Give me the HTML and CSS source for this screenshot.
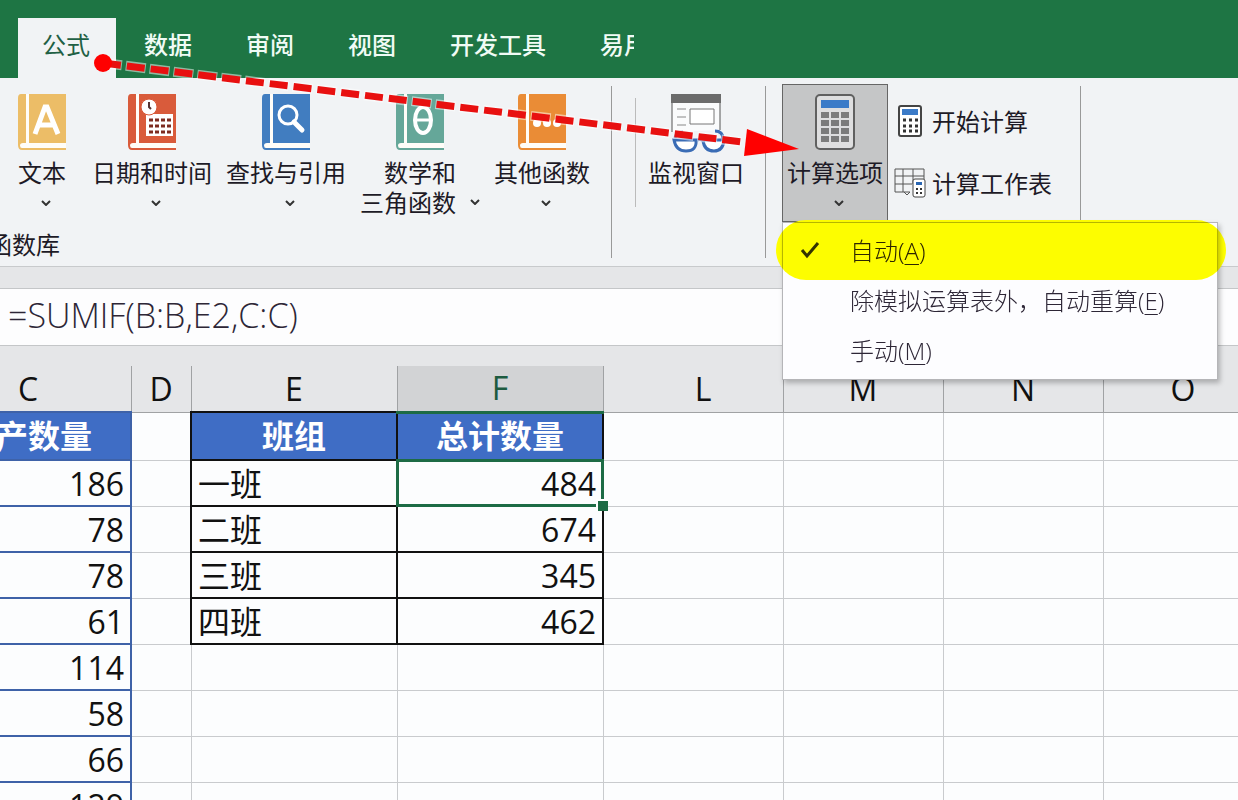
FILE: index.html
```html
<!DOCTYPE html>
<html lang="zh-CN">
<head>
    <meta charset="UTF-8">
    <meta name="viewport" content="width=device-width, initial-scale=1.0">
    <title>Excel 公式 - 计算选项</title>
    <link rel="stylesheet" href="styles.css">
</head>
<body>
    <!-- 公用图形 -->
    <svg class="defs" width="0" height="0" aria-hidden="true">
        <symbol id="book" viewBox="0 0 48 56">
            <path d="M3 0H48V56H4Q0 56 0 51V4Q0 0 3 0Z" fill="currentColor"/>
            <path d="M8 0H11V49H48V54H4Q2 54 2 51.500Q2 49 5 49H8Z" fill="#fffdf8"/>
        </symbol>
        <symbol id="chevron" viewBox="0 0 10 6">
            <path d="M1 1L5 5L9 1" fill="none" stroke="#333" stroke-width="2"/>
        </symbol>
    </svg>

    <div class="app">
        <nav class="tabs">
            <button class="tab active">公式</button>
            <button class="tab">数据</button>
            <button class="tab">审阅</button>
            <button class="tab">视图</button>
            <button class="tab">开发工具</button>
            <button class="tab cut"><span>易用</span></button>
        </nav>

        <div class="ribbon">
            <div class="group library">
                <div class="tools">
                    <button class="tool text">
                        <svg class="icon yellow" width="48" height="56" viewBox="0 0 48 56"><use href="#book"/>
                            <path d="M17 40L27 13H29L40 40M21 31H36" fill="none" stroke="#fff" stroke-width="5"/>
                        </svg>
                        <span>文本</span>
                        <svg class="arrow" width="10" height="6"><use href="#chevron"/></svg>
                    </button>
                    <button class="tool">
                        <svg class="icon red" width="48" height="56" viewBox="0 0 48 56"><use href="#book"/>
                            <path d="M18 20H45V42H18Z" fill="#fff"/>
                            <circle cx="21" cy="13" r="8" fill="#fff" stroke="#d85736"/>
                            <path d="M21 8V13L23 15" fill="none" stroke="#533" stroke-width="2"/>
                            <path d="M21 26H43M21 32H43M21 38H43" stroke="#7d2b20" stroke-width="3" stroke-dasharray="4 2"/>
                        </svg>
                        <span>日期和时间</span>
                        <svg class="arrow" width="10" height="6"><use href="#chevron"/></svg>
                    </button>
                    <button class="tool">
                        <svg class="icon blue" width="48" height="56" viewBox="0 0 48 56"><use href="#book"/>
                            <circle cx="26" cy="21" r="9" fill="none" stroke="#fff" stroke-width="3"/>
                            <path d="M32 28L40 36" stroke="#fff" stroke-width="5" stroke-linecap="round"/>
                        </svg>
                        <span>查找与引用</span>
                        <svg class="arrow" width="10" height="6"><use href="#chevron"/></svg>
                    </button>
                    <button class="tool">
                        <svg class="icon teal" width="48" height="56" viewBox="0 0 48 56"><use href="#book"/>
                            <ellipse cx="27" cy="26" rx="8" ry="13" fill="none" stroke="#fff" stroke-width="4"/>
                            <path d="M19 26H35" stroke="#fff" stroke-width="3"/>
                        </svg>
                        <span>数学和</span>
                        <span class="line">三角函数<svg width="10" height="6"><use href="#chevron"/></svg></span>
                    </button>
                    <button class="tool">
                        <svg class="icon orange" width="48" height="56" viewBox="0 0 48 56"><use href="#book"/>
                            <circle cx="19" cy="29" r="4" fill="#fff"/>
                            <circle cx="29" cy="29" r="4" fill="#fff"/>
                            <circle cx="39" cy="29" r="4" fill="#fff"/>
                        </svg>
                        <span>其他函数</span>
                        <svg class="arrow" width="10" height="6"><use href="#chevron"/></svg>
                    </button>
                </div>
                <div class="group-name">函数库</div>
            </div>

            <div class="group watch">
                <button class="tool">
                    <svg class="icon" width="54" height="56" viewBox="0 0 54 56">
                        <path d="M3 38V1H51V36" fill="#fafbfc" stroke="#555" stroke-width="1"/>
                        <path d="M2 0H52V9H2Z" fill="#6b6b6b"/>
                        <path d="M8 15H17M8 23H17M8 31H17" stroke="#888"/>
                        <path d="M21 15H45V30H21Z" fill="#fff" stroke="#777"/>
                        <path d="M6 44Q7 38 14 38M54 45Q54 37 46 37" fill="none" stroke="#3a6cb5" stroke-width="3"/>
                        <path d="M5 46H27Q28 57 17 57Q7 57 5 46ZM34 46H55Q54 57 45 57Q35 57 34 46ZM27 47Q31 44 34 47" fill="#fff" stroke="#3a6cb5" stroke-width="3"/>
                    </svg>
                    <span>监视窗口</span>
                </button>
            </div>

            <div class="group calc">
                <div class="options">
                    <button class="tool pressed" aria-haspopup="menu" aria-expanded="true">
                        <svg class="icon" width="40" height="56" viewBox="0 0 40 56">
                            <rect x="1" y="1" width="38" height="54" rx="4" fill="#dededf" stroke="#606060" stroke-width="2"/>
                            <path d="M6 6H34V14H6Z" fill="#3b7bc8"/>
                            <path d="M6 21H34M6 29H34M6 37H34M6 45H34" stroke="#7c7c7c" stroke-width="6" stroke-dasharray="8 2"/>
                        </svg>
                        <span>计算选项</span>
                        <svg class="arrow" width="10" height="6"><use href="#chevron"/></svg>
                    </button>
                    <div class="menu" role="menu">
                        <button role="menuitemradio" aria-checked="true">
                            <svg class="check" width="18" height="16" viewBox="0 0 18 16"><path d="M1 8L6 14L17 1" fill="none" stroke="#333" stroke-width="3"/></svg>
                            自动(<u>A</u>)
                        </button>
                        <button role="menuitemradio" aria-checked="false">除模拟运算表外，自动重算(<u>E</u>)</button>
                        <button role="menuitemradio" aria-checked="false">手动(<u>M</u>)</button>
                        <div class="marker"></div>
                    </div>
                </div>
                <div class="side">
                    <button>
                        <svg width="32" height="32" viewBox="0 0 32 32">
                            <rect x="5" y="1" width="22" height="30" rx="2" fill="#fff" stroke="#444" stroke-width="2"/>
                            <path d="M8 4H24V10H8Z" fill="#3b7bc8"/>
                            <path d="M9 15H24M9 21H24M9 26H24" stroke="#333" stroke-width="3" stroke-dasharray="3 3"/>
                        </svg>
                        开始计算
                    </button>
                    <button>
                        <svg width="32" height="32" viewBox="0 0 32 32">
                            <path d="M1 2H30V12M1 2V25H16M1 9H30M1 17H18M9 2V25M19 2V17" fill="none" stroke="#555" stroke-width="1"/>
                            <path d="M10 25L13 28L16 25" fill="none" stroke="#555"/>
                            <rect x="19" y="12" width="12" height="18" rx="2" fill="#fff" stroke="#444"/>
                            <path d="M22 15H28V18H22Z" fill="#2a66b2"/>
                            <path d="M22 22H29M22 26H29" stroke="#333" stroke-width="2" stroke-dasharray="2 2"/>
                        </svg>
                        计算工作表
                    </button>
                </div>
            </div>
        </div>

        <div class="formula">
            <input type="text" aria-label="编辑栏" value="=SUMIF(B:B,E2,C:C)">
        </div>

        <div class="sheet">
            <table>
                <colgroup>
                    <col class="w-c"><col class="w-d"><col class="w-e"><col class="w-f"><col class="w-l"><col class="w-m"><col class="w-m"><col class="w-m"><col>
                </colgroup>
                <thead>
                    <tr><th>C</th><th>D</th><th>E</th><th class="current">F</th><th class="after-hidden">L</th><th>M</th><th>N</th><th>O</th><th></th></tr>
                </thead>
                <tbody>
                    <tr class="title"><td class="c">生产数量</td><td></td><td class="box">班组</td><td class="box">总计数量</td><td></td><td></td><td></td><td></td><td></td></tr>
                    <tr><td class="c">186</td><td></td><td class="box">一班</td><td class="box num selected">484<i class="handle"></i></td><td></td><td></td><td></td><td></td><td></td></tr>
                    <tr><td class="c">78</td><td></td><td class="box">二班</td><td class="box num">674</td><td></td><td></td><td></td><td></td><td></td></tr>
                    <tr><td class="c">78</td><td></td><td class="box">三班</td><td class="box num">345</td><td></td><td></td><td></td><td></td><td></td></tr>
                    <tr><td class="c">61</td><td></td><td class="box">四班</td><td class="box num">462</td><td></td><td></td><td></td><td></td><td></td></tr>
                    <tr><td class="c">114</td><td></td><td></td><td></td><td></td><td></td><td></td><td></td><td></td></tr>
                    <tr><td class="c">58</td><td></td><td></td><td></td><td></td><td></td><td></td><td></td><td></td></tr>
                    <tr><td class="c">66</td><td></td><td></td><td></td><td></td><td></td><td></td><td></td><td></td></tr>
                    <tr><td class="c">129</td><td></td><td></td><td></td><td></td><td></td><td></td><td></td><td></td></tr>
                </tbody>
            </table>
        </div>

        <!-- 红色指引箭头 -->
        <svg class="pointer" width="820" height="170" viewBox="0 0 820 170" aria-hidden="true">
            <path d="M103 63L742 142" stroke="#fff" stroke-opacity="0.5" stroke-width="10" stroke-dasharray="20 4" stroke-dashoffset="1"/>
            <path d="M103 63L742 142" stroke="#e81010" stroke-width="7" stroke-dasharray="18 6"/>
            <circle cx="103" cy="63" r="9" fill="#f00"/>
            <path d="M747 129L799 149L744 156Z" fill="#f00"/>
        </svg>
    </div>
</body>
</html>
```

FILE: styles.css
```css
* {
    box-sizing: border-box;
}
body {
    margin: 0;
    font-family: "Open Sans", "Noto Sans CJK SC", sans-serif;
    color: #1d1a26;
    background-color: #fcfdfe;
}
button {
    margin: 0;
    padding: 0;
    border: none;
    background: none;
    color: inherit;
    font-family: "Noto Sans CJK SC", sans-serif;
    font-size: 24px;
    line-height: 30px;
    white-space: nowrap;
    cursor: pointer;
}
svg {
    flex: none;
    overflow: visible;
}
.defs {
    position: absolute;
}
.app {
    position: relative;
    height: 100vh;
    overflow: hidden;
}

/* 选项卡 */
.tabs {
    display: flex;
    gap: 4px;
    padding: 18px 18px 0;
    background-color: #1e7544;
}
.tab {
    height: 60px;
    padding: 0 26px 8px 24px;
    color: #f0fbf5;
    font-weight: 500;
}
.tab.active {
    background-color: #f1f3f5;
    color: #1f6044;
    font-weight: 400;
}
.tab.cut span {
    display: block;
    width: 34px;
    overflow: hidden;
}

/* 功能区 */
.ribbon {
    display: flex;
    height: 189px;
    padding-top: 6px;
    background-color: #f1f3f5;
    border-bottom: 1px solid #c8cacc;
}
.group {
    position: relative;
}
.group::after {
    content: "";
    position: absolute;
    top: 2px;
    right: 0;
    width: 1px;
    height: 172px;
    background-color: #999;
}
.library {
    padding: 0 22px 0 6px;
}
.tools {
    display: flex;
    gap: 14px;
}
.tool {
    display: flex;
    flex-direction: column;
    align-items: center;
    height: 138px;
    padding-top: 10px;
}
.tool.text {
    width: 72px;
}
.icon {
    margin-bottom: 7px;
}
.arrow {
    margin: 13px 0 0 8px;
}
.line {
    display: flex;
    align-items: center;
    gap: 14px;
}
.yellow { color: #ecbd67; }
.red { color: #d95b3b; }
.blue { color: #417dc0; }
.teal { color: #65a799; }
.orange { color: #ea8c36; }
.group-name {
    margin: 8px 0 0 -18px;
    font-size: 24px;
    line-height: 30px;
}
.watch {
    padding: 0 22px 0 36px;
}
.watch::before {
    content: "";
    position: absolute;
    top: 14px;
    left: 23px;
    width: 1px;
    height: 109px;
    background-color: #bbb;
}
.calc {
    display: flex;
    padding: 0 29px 0 16px;
}
.options {
    position: relative;
}
.pressed {
    width: 106px;
    padding-top: 9px;
    background-color: #c5c6c7;
    border: 1px solid #666;
}
.side {
    display: flex;
    flex-direction: column;
    gap: 32px;
    padding: 22px 0 0 6px;
}
.side button {
    display: flex;
    align-items: center;
    gap: 6px;
    height: 30px;
}

/* 下拉菜单 */
.menu {
    position: absolute;
    top: 138px;
    left: 0;
    z-index: 2;
    width: 436px;
    padding: 4px 0 2px;
    background-color: #fdfdff;
    border: 1px solid #b5b5b8;
    box-shadow: 2px 3px 5px rgba(0, 0, 0, 0.25);
}
.menu button {
    display: block;
    position: relative;
    width: 100%;
    height: 50px;
    padding: 0 0 3px 67px;
    color: #2d2636;
    font-family: "Open Sans", "Noto Sans CJK SC", sans-serif;
    font-weight: 300;
    text-align: left;
}
.menu u {
    text-decoration-thickness: 1px;
    text-underline-offset: 4px;
}
.check {
    position: absolute;
    top: 15px;
    left: 18px;
}
.marker {
    position: absolute;
    top: -3px;
    left: -7px;
    right: -9px;
    height: 60px;
    border-radius: 30px;
    background-color: #ff0;
    mix-blend-mode: multiply;
    pointer-events: none;
}

/* 编辑栏 */
.formula {
    padding: 21px 0 20px;
    background-color: #e5e6e8;
}
.formula input {
    display: block;
    width: 100%;
    height: 58px;
    padding: 0 8px 4px;
    border: solid #c4c6c8;
    border-width: 1px 0;
    border-radius: 0;
    background-color: #fdfdfe;
    color: #2d2636;
    font-family: "Open Sans", sans-serif;
    font-size: 34px;
    font-weight: 300;
}

/* 表格 */
.sheet {
    margin-left: -76px;
}
table {
    width: 100%;
    table-layout: fixed;
    border-collapse: collapse;
    font-size: 32px;
    line-height: 40px;
}
.w-c, .w-e, .w-f { width: 206px; }
.w-d { width: 60px; }
.w-l { width: 180px; }
.w-m { width: 160px; }
th {
    height: 46px;
    padding: 0;
    background-color: #e5e6e8;
    border: solid #a0a2a4;
    border-width: 0 1px 1px;
    color: #111;
    font-weight: 400;
}
th.current {
    background-color: #d2d3d5;
    border-bottom: 3px solid #1d6b45;
    color: #1d5b40;
}
th.after-hidden {
    padding-left: 20px;
}
td {
    height: 46px;
    padding: 2px 6px 0;
    border: 1px solid #c9cbce;
    color: #111;
}
.title td {
    height: 48px;
    padding-top: 0;
}
td.c {
    border: 2px solid #3e62a8;
    text-align: right;
}
td.box {
    border: 2px solid #111;
}
td.num {
    text-align: right;
}
.title .c, .title .box {
    background-color: #3f6dc5;
    color: #fff;
    font-weight: 700;
    text-align: center;
}
td.selected {
    position: relative;
}
.selected::before {
    content: "";
    position: absolute;
    inset: -2px;
    border: 3px solid #1d6b45;
}
.handle {
    position: absolute;
    right: -6px;
    bottom: -6px;
    width: 12px;
    height: 12px;
    background-color: #1d6b45;
    border: solid #fff;
    border-width: 2px 0 0 2px;
}

.pointer {
    position: absolute;
    top: 0;
    left: 0;
    z-index: 3;
    pointer-events: none;
}
```
